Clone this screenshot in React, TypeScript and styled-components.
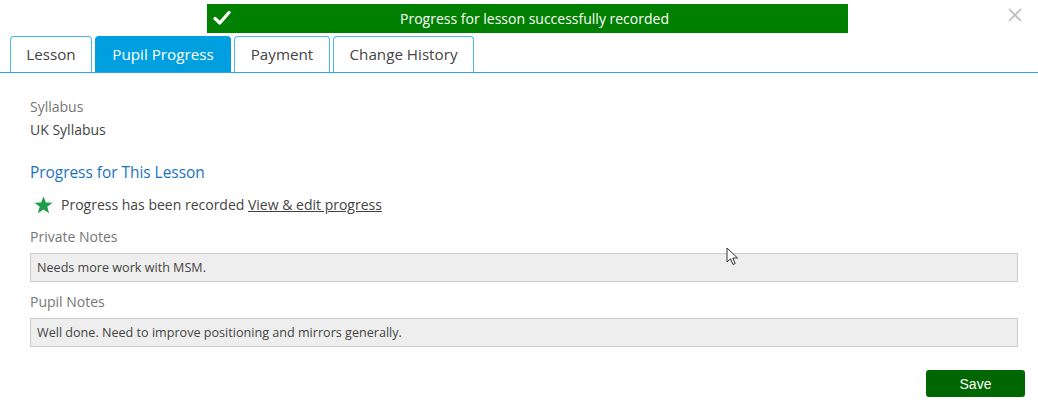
import React from 'react';
import styled, { createGlobalStyle } from 'styled-components';

const GlobalStyle = createGlobalStyle`
  html, body {
    margin: 0;
    padding: 0;
    background: #fff;
  }
  body {
    font-family: "Open Sans", "Noto Sans", "Liberation Sans", sans-serif;
    color: #444;
  }
`;

const Page = styled.div`
  position: relative;
  width: 1038px;
  height: 408px;
  overflow: hidden;
  background: #fff;
`;

const ToastRow = styled.div`
  display: flex;
  padding: 4px 0 0 207px;
  height: 29px;
`;

const Toast = styled.div`
  position: relative;
  display: flex;
  align-items: center;
  justify-content: center;
  box-sizing: border-box;
  width: 641px;
  height: 29px;
  padding-left: 14px;
  background: #008000;
  color: #fff;
  font-size: 14px;

  svg {
    position: absolute;
    left: 6px;
    top: 5px;
  }
`;

const CloseBtn = styled.button`
  position: absolute;
  top: 7px;
  right: 14px;
  width: 18px;
  height: 18px;
  padding: 0;
  border: 0;
  background: none;
  cursor: pointer;
`;

const TabBar = styled.div`
  display: flex;
  gap: 3px;
  margin-top: 3px;
  padding-left: 10px;
  height: 36px;
  border-bottom: 1px solid #29a8e0;
`;

const Tab = styled.div<{ $active?: boolean; $width: number }>`
  display: flex;
  align-items: center;
  justify-content: center;
  box-sizing: border-box;
  width: ${p => p.$width}px;
  height: 36px;
  padding-bottom: 1px;
  border: 1px solid ${p => (p.$active ? '#00a0e0' : '#4db8e8')};
  border-bottom: 0;
  border-radius: 4px 4px 0 0;
  background: ${p => (p.$active ? '#00a0e0' : '#fff')};
  color: ${p => (p.$active ? '#fff' : '#444')};
  font-size: 15.2px;
`;

const Content = styled.div`
  display: flex;
  flex-direction: column;
  padding: 24px 20px 0 30px;
`;

const Label = styled.div`
  font-size: 14px;
  color: #777;
  line-height: 20px;
`;

const Value = styled.div`
  font-size: 14px;
  color: #444;
  line-height: 20px;
  margin-top: 3px;
`;

const Heading = styled.div`
  font-size: 15.4px;
  color: #1a73c0;
  margin-top: 22px;
  line-height: 22px;
`;

const StatusRow = styled.div`
  display: flex;
  align-items: center;
  gap: 8px;
  margin-top: 11px;
  padding-left: 4px;
  font-size: 14px;
  color: #444;
  line-height: 20px;

  a {
    color: #444;
    text-decoration: underline;
  }
`;

const FieldLabel = styled(Label)<{ $gap: number }>`
  margin-top: ${p => p.$gap}px;
`;

const NoteBox = styled.div`
  box-sizing: border-box;
  width: 988px;
  height: 29px;
  margin-top: 6px;
  padding: 0 6px;
  display: flex;
  align-items: center;
  background: #eee;
  border: 1px solid #ccc;
  font-size: 12.6px;
  color: #444;
`;

const Footer = styled.div`
  display: flex;
  justify-content: flex-end;
  padding: 23px 13px 0 0;
`;

const SaveButton = styled.button`
  width: 99px;
  height: 27px;
  border: 0;
  border-radius: 3px;
  background: #006600;
  color: #fff;
  font-family: "Liberation Sans", Arial, sans-serif;
  font-size: 14px;
  cursor: pointer;
`;

const Cursor = styled.svg`
  position: absolute;
  left: 726px;
  top: 247px;
`;

const tabs = [
  { label: 'Lesson', width: 82 },
  { label: 'Pupil Progress', width: 136, active: true },
  { label: 'Payment', width: 96 },
  { label: 'Change History', width: 141 },
];

export default function App() {
  return (
    <Page>
      <GlobalStyle />
      <ToastRow>
        <Toast>
          <svg width="18" height="18" viewBox="0 0 18 18">
            <path d="M2 9.5 L6.8 14 L16 3.5" fill="none" stroke="#fff" strokeWidth="3.2" strokeLinecap="round" strokeLinejoin="round" />
          </svg>
          Progress for lesson successfully recorded
        </Toast>
      </ToastRow>
      <CloseBtn aria-label="Close">
        <svg width="14" height="14" viewBox="0 0 14 14">
          <path d="M1 1 L13 13 M13 1 L1 13" stroke="#bbb" strokeWidth="1.6" />
        </svg>
      </CloseBtn>

      <TabBar>
        {tabs.map(t => (
          <Tab key={t.label} $active={t.active} $width={t.width}>
            {t.label}
          </Tab>
        ))}
      </TabBar>

      <Content>
        <Label>Syllabus</Label>
        <Value>UK Syllabus</Value>
        <Heading>Progress for This Lesson</Heading>
        <StatusRow>
          <svg width="19" height="18" viewBox="0 0 24 23">
            <path d="M12 0.5 L15 8.2 L23.5 8.6 L16.8 13.8 L19.2 22 L12 17.3 L4.8 22 L7.2 13.8 L0.5 8.6 L9 8.2 Z" fill="#1a9e4a" />
          </svg>
          <span>
            Progress has been recorded <a href="#">View &amp; edit progress</a>
          </span>
        </StatusRow>
        <FieldLabel $gap={12}>Private Notes</FieldLabel>
        <NoteBox>Needs more work with MSM.</NoteBox>
        <FieldLabel $gap={10}>Pupil Notes</FieldLabel>
        <NoteBox>Well done. Need to improve positioning and mirrors generally.</NoteBox>
      </Content>

      <Footer>
        <SaveButton>Save</SaveButton>
      </Footer>

      <Cursor width="14" height="20" viewBox="0 0 14 20">
        <path d="M1 1 L1 15 L4.5 11.8 L7 17.5 L9.2 16.5 L6.8 11 L11.5 11 Z" fill="#fff" stroke="#333" strokeWidth="1" strokeLinejoin="round" />
      </Cursor>
    </Page>
  );
}
